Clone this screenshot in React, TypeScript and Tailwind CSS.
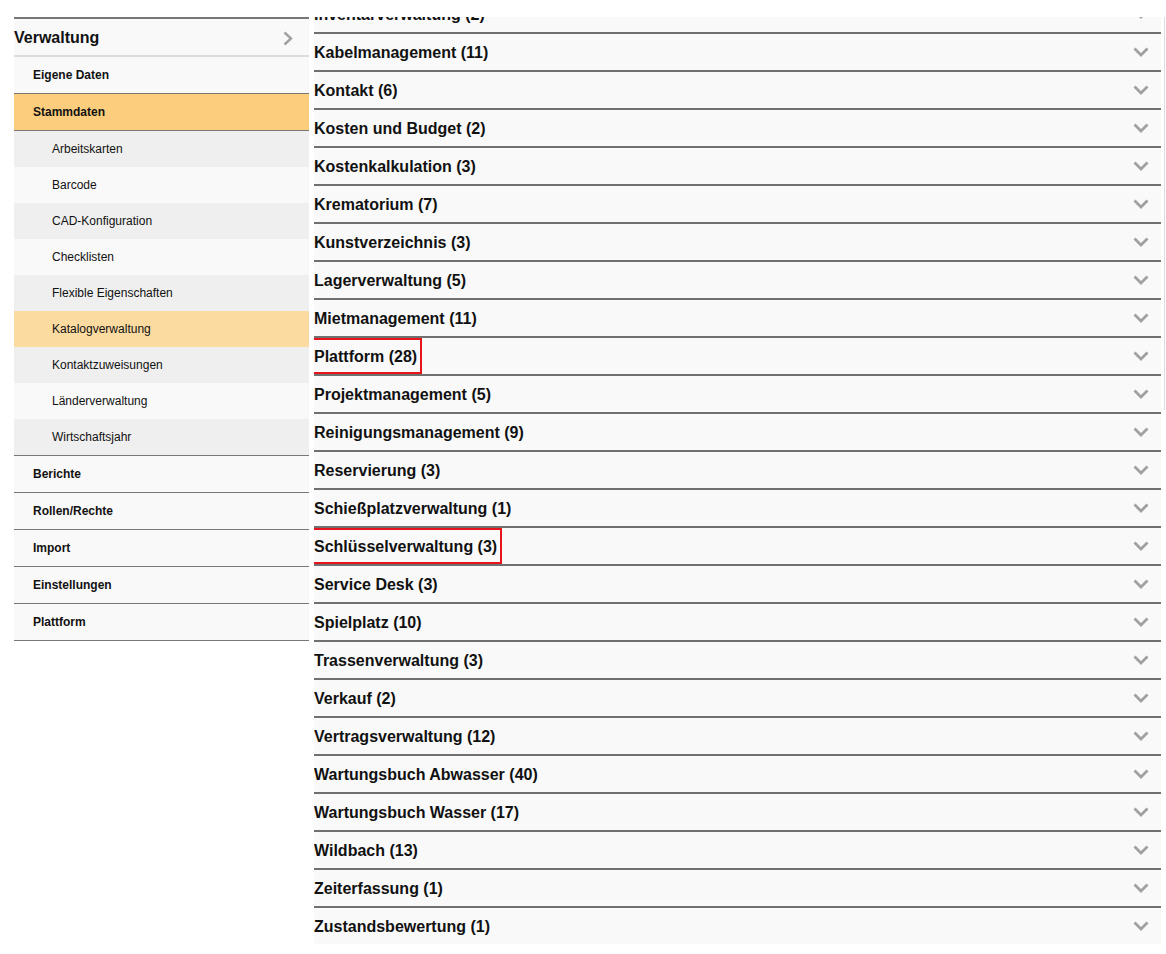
const subItems = [
  'Arbeitskarten',
  'Barcode',
  'CAD-Konfiguration',
  'Checklisten',
  'Flexible Eigenschaften',
  'Katalogverwaltung',
  'Kontaktzuweisungen',
  'Länderverwaltung',
  'Wirtschaftsjahr',
];

const mainItems = ['Berichte', 'Rollen/Rechte', 'Import', 'Einstellungen', 'Plattform'];

const modules: [string, number][] = [
  ['Inventarverwaltung', 2],
  ['Kabelmanagement', 11],
  ['Kontakt', 6],
  ['Kosten und Budget', 2],
  ['Kostenkalkulation', 3],
  ['Krematorium', 7],
  ['Kunstverzeichnis', 3],
  ['Lagerverwaltung', 5],
  ['Mietmanagement', 11],
  ['Plattform', 28],
  ['Projektmanagement', 5],
  ['Reinigungsmanagement', 9],
  ['Reservierung', 3],
  ['Schießplatzverwaltung', 1],
  ['Schlüsselverwaltung', 3],
  ['Service Desk', 3],
  ['Spielplatz', 10],
  ['Trassenverwaltung', 3],
  ['Verkauf', 2],
  ['Vertragsverwaltung', 12],
  ['Wartungsbuch Abwasser', 40],
  ['Wartungsbuch Wasser', 17],
  ['Wildbach', 13],
  ['Zeiterfassung', 1],
  ['Zustandsbewertung', 1],
];

const marked = ['Plattform', 'Schlüsselverwaltung'];

function ChevronDown() {
  return (
    <svg width="16" height="10" viewBox="0 0 16 10" fill="none">
      <path d="M1.5 1.5 L8 8 L14.5 1.5" stroke="#a0a0a0" strokeWidth="2.8" />
    </svg>
  );
}

function ChevronRight() {
  return (
    <svg width="10" height="15" viewBox="0 0 10 15" fill="none">
      <path d="M1.5 1.5 L8 7.5 L1.5 13.5" stroke="#a0a0a0" strokeWidth="2.4" />
    </svg>
  );
}

function Sidebar() {
  return (
    <aside className="w-[295px] shrink-0 border-t-2 border-[#777] text-[#111]">
      <div className="flex h-[36px] items-center justify-between bg-[#f9f9f9] pr-[16px] pt-[2px] text-[16px] font-bold">
        <span>Verwaltung</span>
        <ChevronRight />
      </div>
      <div className="h-[2px] bg-[#dcdcdc]" />
      <div className="flex h-[37px] items-center border-b border-[#777] bg-[#f9f9f9] pl-[19px] text-[12px] font-bold">
        Eigene Daten
      </div>
      <div className="flex h-[37px] items-center border-b border-[#777] bg-[#fbcd7d] pl-[19px] text-[12px] font-bold">
        Stammdaten
      </div>
      <div className="border-b border-[#777]">
        {subItems.map((item, i) => (
          <div
            key={item}
            className={`flex h-[36px] items-center pl-[38px] text-[12px] ${
              item === 'Katalogverwaltung' ? 'bg-[#fcdba1]' : i % 2 === 0 ? 'bg-[#efefef]' : 'bg-[#f9f9f9]'
            }`}
          >
            {item}
          </div>
        ))}
      </div>
      {mainItems.map((item) => (
        <div
          key={item}
          className="flex h-[37px] items-center border-b border-[#777] bg-[#f9f9f9] pl-[19px] text-[12px] font-bold"
        >
          {item}
        </div>
      ))}
    </aside>
  );
}

function ModuleList() {
  return (
    <div className="relative h-[927px] w-[847px] overflow-hidden">
      <div className="-mt-[21px]">
        {modules.map(([name, count], i) => (
          <div
            key={name}
            className={`flex h-[38px] items-start bg-[#f9f9f9] ${i < modules.length - 1 ? 'border-b-2 border-[#707070]' : 'h-[36px]'}`}
          >
            <div className="flex h-[36px] flex-1 items-center justify-between pr-[12px]">
              <span className="relative flex h-[36px] items-center pt-[2px] text-[16px] font-bold text-[#111]">
                {name} ({count})
                {marked.includes(name) && (
                  <span className="absolute inset-y-0 -left-[3px] -right-[5px] border-2 border-[#e8141b]" />
                )}
              </span>
              <ChevronDown />
            </div>
          </div>
        ))}
      </div>
    </div>
  );
}

export default function App() {
  return (
    <div className="min-h-[954px] bg-white font-['Liberation_Sans',Arial,sans-serif]">
      <div className="flex pl-[14px] pt-[17px]">
        <Sidebar />
        <div className="ml-[5px]">
          <ModuleList />
        </div>
        <div className="ml-[3px] h-[393px] w-px bg-[#dedede]" />
      </div>
    </div>
  );
}
